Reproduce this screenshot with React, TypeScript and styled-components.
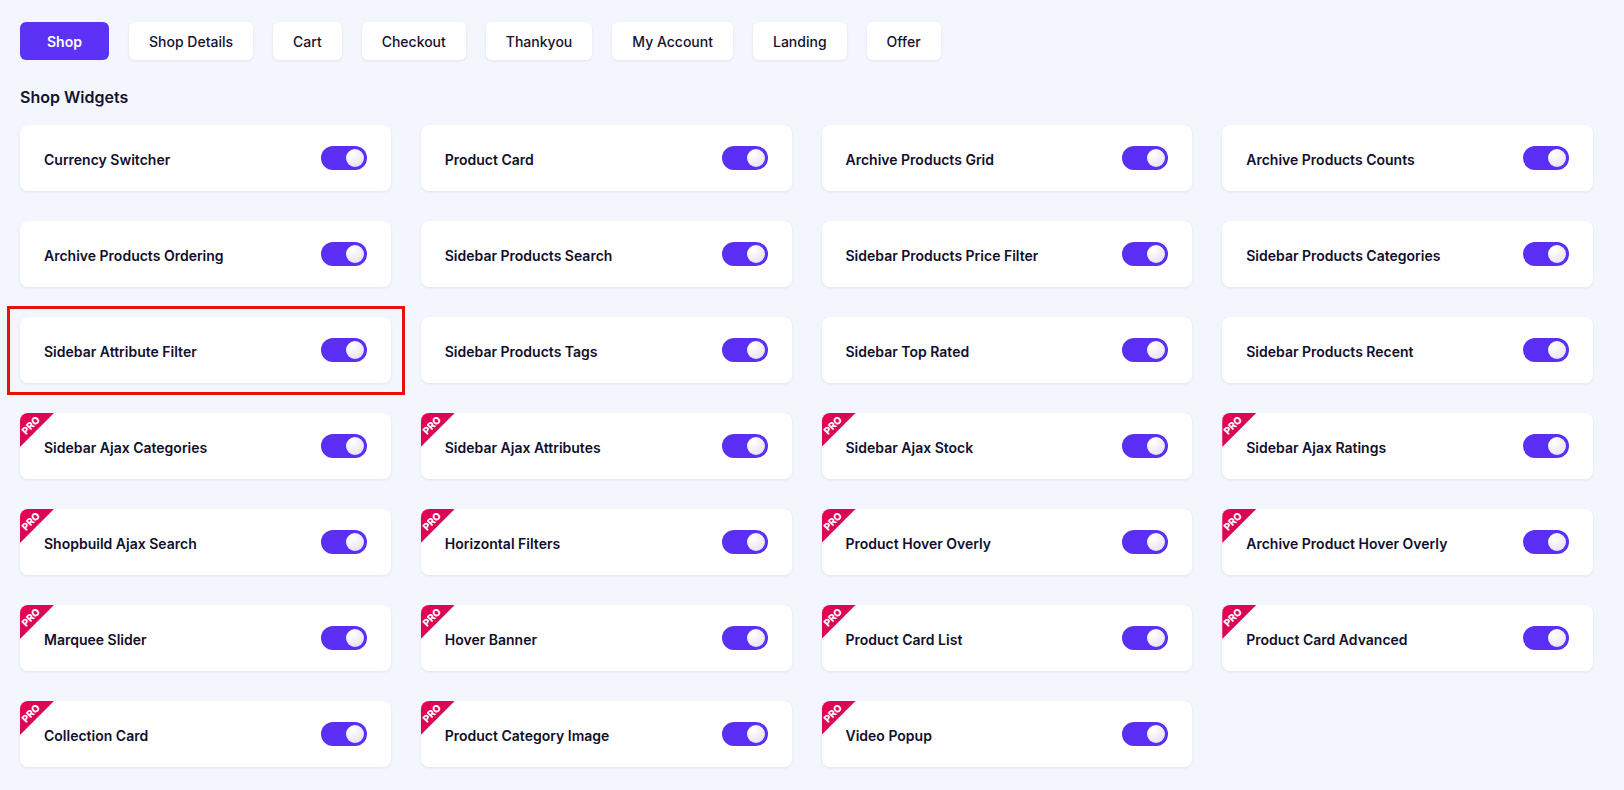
import React, { useState } from "react";
import styled, { createGlobalStyle } from "styled-components";

const GlobalStyle = createGlobalStyle`
  * { box-sizing: border-box; }
  body {
    margin: 0;
    background: #f4f6fd;
    font-family: Inter, "Noto Sans", sans-serif;
    color: #14122e;
  }
`;

const Page = styled.div`
  padding: 22px 31px 24px 20px;
`;

const Tabs = styled.div`
  display: flex;
  gap: 20px;
`;

const Tab = styled.button<{ $active?: boolean }>`
  height: 38px;
  min-width: ${(p) => (p.$active ? "89px" : "0")};
  padding: 0 20px;
  border: none;
  border-radius: 6px;
  font-family: inherit;
  font-size: 14px;
  font-weight: ${(p) => (p.$active ? 600 : 500)};
  color: ${(p) => (p.$active ? "#fff" : "#14122e")};
  background: ${(p) => (p.$active ? "#5b32f6" : "#fff")};
  box-shadow: ${(p) => (p.$active ? "none" : "0 1px 3px rgba(30, 30, 80, 0.08)")};
  cursor: pointer;
`;

const Heading = styled.h2`
  margin: 25px 0 16px;
  font-size: 16px;
  line-height: 24px;
  font-weight: 600;
`;

const Grid = styled.div`
  display: grid;
  grid-template-columns: repeat(4, 1fr);
  column-gap: 30px;
  row-gap: 30px;
`;

const CardWrap = styled.div<{ $highlight?: boolean }>`
  position: relative;
  &::after {
    content: "";
    display: ${(p) => (p.$highlight ? "block" : "none")};
    position: absolute;
    left: -13px;
    top: -11px;
    right: -14px;
    bottom: -12px;
    border: 3px solid #e3120b;
    pointer-events: none;
  }
`;

const Card = styled.div`
  position: relative;
  height: 66px;
  display: flex;
  align-items: center;
  justify-content: space-between;
  padding: 0 24px;
  background: #fff;
  border-radius: 8px;
  box-shadow: 0 1px 3px rgba(30, 30, 80, 0.08);
  overflow: hidden;
`;

const Label = styled.span`
  font-size: 14px;
  font-weight: 600;
  color: #120f2c;
  margin-top: 2px;
`;

const ProBadge = styled.div`
  position: absolute;
  left: 0;
  top: 0;
  width: 34px;
  height: 34px;
  background: linear-gradient(135deg, #e8004f 0%, #c2145e 100%);
  clip-path: polygon(0 0, 100% 0, 0 100%);
`;

const ProText = styled.span`
  position: absolute;
  left: 0px;
  top: 6px;
  font-size: 10px;
  line-height: 12px;
  font-weight: 800;
  color: #fff;
  transform: rotate(-45deg);
`;

const Switch = styled.button<{ $on: boolean }>`
  position: relative;
  width: 46px;
  height: 24px;
  border: none;
  border-radius: 12px;
  padding: 0;
  background: ${(p) => (p.$on ? "#5a2ef5" : "#cfd2e0")};
  cursor: pointer;
  flex-shrink: 0;
`;

const Knob = styled.span<{ $on: boolean }>`
  position: absolute;
  top: 3px;
  left: ${(p) => (p.$on ? "25px" : "3px")};
  width: 18px;
  height: 18px;
  border-radius: 50%;
  background: radial-gradient(circle at 35% 30%, #ffffff 0%, #f1f0fb 45%, #d9d8f2 100%);
  transition: left 0.15s;
`;

type Widget = { name: string; pro?: boolean; highlight?: boolean };

const widgets: Widget[] = [
  { name: "Currency Switcher" },
  { name: "Product Card" },
  { name: "Archive Products Grid" },
  { name: "Archive Products Counts" },
  { name: "Archive Products Ordering" },
  { name: "Sidebar Products Search" },
  { name: "Sidebar Products Price Filter" },
  { name: "Sidebar Products Categories" },
  { name: "Sidebar Attribute Filter", highlight: true },
  { name: "Sidebar Products Tags" },
  { name: "Sidebar Top Rated" },
  { name: "Sidebar Products Recent" },
  { name: "Sidebar Ajax Categories", pro: true },
  { name: "Sidebar Ajax Attributes", pro: true },
  { name: "Sidebar Ajax Stock", pro: true },
  { name: "Sidebar Ajax Ratings", pro: true },
  { name: "Shopbuild Ajax Search", pro: true },
  { name: "Horizontal Filters", pro: true },
  { name: "Product Hover Overly", pro: true },
  { name: "Archive Product Hover Overly", pro: true },
  { name: "Marquee Slider", pro: true },
  { name: "Hover Banner", pro: true },
  { name: "Product Card List", pro: true },
  { name: "Product Card Advanced", pro: true },
  { name: "Collection Card", pro: true },
  { name: "Product Category Image", pro: true },
  { name: "Video Popup", pro: true },
];

const tabs = ["Shop", "Shop Details", "Cart", "Checkout", "Thankyou", "My Account", "Landing", "Offer"];

function WidgetCard({ widget }: { widget: Widget }) {
  const [on, setOn] = useState(true);
  return (
    <CardWrap $highlight={widget.highlight}>
      <Card>
        {widget.pro && (
          <ProBadge>
            <ProText>PRO</ProText>
          </ProBadge>
        )}
        <Label>{widget.name}</Label>
        <Switch $on={on} onClick={() => setOn(!on)} aria-label={widget.name}>
          <Knob $on={on} />
        </Switch>
      </Card>
    </CardWrap>
  );
}

export default function App() {
  const [active, setActive] = useState("Shop");
  return (
    <Page>
      <GlobalStyle />
      <Tabs>
        {tabs.map((t) => (
          <Tab key={t} $active={t === active} onClick={() => setActive(t)}>
            {t}
          </Tab>
        ))}
      </Tabs>
      <Heading>Shop Widgets</Heading>
      <Grid>
        {widgets.map((w) => (
          <WidgetCard key={w.name} widget={w} />
        ))}
      </Grid>
    </Page>
  );
}
